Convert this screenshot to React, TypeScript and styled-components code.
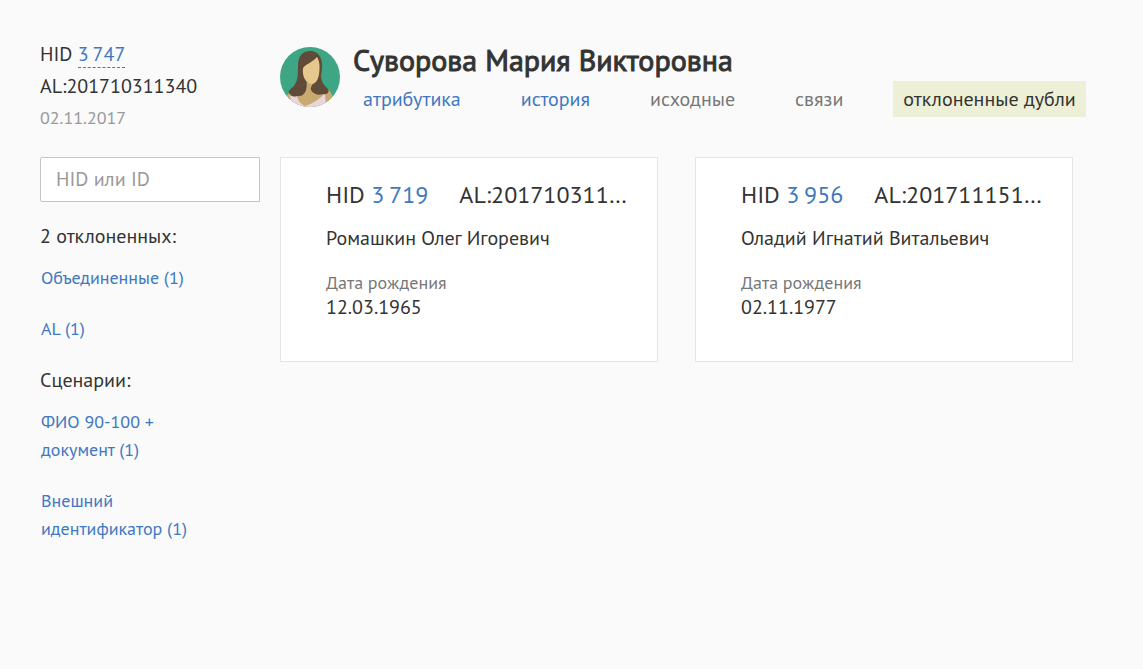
import React from "react";
import styled, { createGlobalStyle } from "styled-components";

const color = {
  page: "#fafafa",
  text: "#333333",
  link: "#4078c0",
  muted: "#999999",
  label: "#777777",
  border: "#e5e5e5",
  inputBorder: "#c4c4c4",
  active: "#edefd7",
};

const GlobalStyle = createGlobalStyle`
  *, *::before, *::after { box-sizing: border-box; }
  body {
    margin: 0;
    background: ${color.page};
    color: ${color.text};
    font-family: "PT Sans", "Noto Sans", sans-serif;
    font-size: 20px;
    line-height: 32px;
  }
  h1, h2, p, ul, dl, dd { margin: 0; padding: 0; }
  a { color: ${color.link}; text-decoration: none; }
`;

const Page = styled.div`
  display: grid;
  grid-template-columns: 220px minmax(0, 1fr);
  column-gap: 20px;
  padding: 38px 40px 40px;
`;

const Summary = styled.div`
  display: flex;
  flex-direction: column;
  align-items: flex-start;
`;

const CurrentLink = styled.a`
  display: inline-block;
  line-height: 26px;
  border-bottom: 1px dashed ${color.link};
`;

const SummaryDate = styled.p`
  color: ${color.muted};
  font-size: 18px;
`;

const Header = styled.header`
  display: flex;
  gap: 13px;
`;

const Portrait = styled.svg`
  display: block;
  flex: none;
  width: 60px;
  height: 60px;
  margin-top: 9px;
`;

const Name = styled.h1`
  font-size: 30px;
  line-height: 43px;
  font-weight: 400;
  -webkit-text-stroke: 1px ${color.text};
  white-space: nowrap;
`;

const Tabs = styled.nav`
  display: flex;
  gap: 40px;
  white-space: nowrap;
`;

const Tab = styled.a<{ $active?: boolean; $disabled?: boolean }>`
  padding: 0 10px;
  line-height: 36px;
  color: ${(p) => (p.$active ? color.text : p.$disabled ? color.label : color.link)};
  background: ${(p) => (p.$active ? color.active : "transparent")};
`;

const Sidebar = styled.aside`
  padding-top: 23px;
`;

const Search = styled.input`
  display: block;
  width: 100%;
  height: 45px;
  padding: 0 15px 2px;
  border: 1px solid ${color.inputBorder};
  border-radius: 2px 0 0 2px;
  background: #ffffff;
  color: ${color.text};
  font: inherit;
  line-height: 24px;
  &::placeholder { color: ${color.muted}; opacity: 1; }
`;

const Filters = styled.div`
  display: flex;
  flex-direction: column;
  gap: 23px;
  padding-top: 20px;
`;

const FilterTitle = styled.h2`
  font-size: 20px;
  line-height: 28px;
  font-weight: 400;
`;

const FilterList = styled.ul`
  display: flex;
  flex-direction: column;
  gap: 23px;
  width: 150px;
  margin-top: 14px;
  padding-left: 1px;
  list-style: none;
  font-size: 18px;
  line-height: 28px;
`;

const Cards = styled.main`
  display: grid;
  grid-template-columns: repeat(2, minmax(0, 1fr));
  column-gap: 37px;
  align-items: start;
  padding: 23px 30px 0 0;
`;

const Card = styled.article`
  padding: 20px 30px 42px 45px;
  border: 1px solid ${color.border};
  background: #ffffff;
`;

const CardHead = styled.div`
  display: flex;
  gap: 31px;
  font-size: 24px;
  line-height: 34px;
  white-space: nowrap;
`;

const CardName = styled.p`
  margin-top: 12px;
  line-height: 28px;
`;

const Facts = styled.dl`
  margin-top: 19px;
  line-height: 24px;
`;

const FactLabel = styled.dt`
  color: ${color.label};
  font-size: 18px;
`;

interface Duplicate {
  hid: string;
  externalId: string;
  name: string;
  birthDate: string;
}

const duplicates: Duplicate[] = [
  { hid: "3\u2009719", externalId: "AL:201710311…", name: "Ромашкин Олег Игоревич", birthDate: "12.03.1965" },
  { hid: "3\u2009956", externalId: "AL:201711151…", name: "Оладий Игнатий Витальевич", birthDate: "02.11.1977" },
];

const filterGroups = [
  { title: "2 отклоненных:", items: ["Объединенные (1)", "AL (1)"] },
  { title: "Сценарии:", items: ["ФИО 90-100 + документ (1)", "Внешний идентификатор (1)"] },
];

function Avatar() {
  return (
    <Portrait viewBox="0 0 60 60" role="img" aria-label="Портрет">
      <defs>
        <clipPath id="portrait">
          <circle cx="30" cy="30" r="30" />
        </clipPath>
      </defs>
      <g clipPath="url(#portrait)">
        <rect width="60" height="60" fill="#3ea585" />
        <path d="M5 60 C5 50 8 44 15 41 L26 36 H34 L45 40 C51 43 54 50 54 60 Z" fill="#c8a970" />
        <path d="M10 49 L17 49 C18 54 21 57 25 59 C32 57 40 52 45 46 L46 60 H12 Z" fill="#e8d5dc" />
        <path
          d="M30 4 C22 4 18 10 18 18 C18 28 18 35 13 40 C9 43 7 46 10 47 C12 50 15 50 17 49 C21 50 25 47 26 43 C27 39 27 36 26 34 L35 34 C33 37 30 40 31 43 C33 47 39 49 43 47 C47 48 50 45 48 42 C45 39 41 35 41 29 C42 23 43 17 41 12 C39 6 35 4 30 4 Z"
          fill="#604b38"
        />
        <path d="M23 21 C26 17 33 15 37 10 C40 14 40 22 39 27 C38 34 35 37 31 37 C26 36 22 30 23 21 Z" fill="#e7c78d" />
      </g>
    </Portrait>
  );
}

export default function App() {
  return (
    <>
      <GlobalStyle />
      <Page>
        <Summary>
          <div>
            HID <CurrentLink href="#current">{"3\u2009747"}</CurrentLink>
          </div>
          <p>AL:201710311340</p>
          <SummaryDate>02.11.2017</SummaryDate>
        </Summary>
        <Header>
          <Avatar />
          <div>
            <Name>Суворова Мария Викторовна</Name>
            <Tabs>
              <Tab href="#attributes">атрибутика</Tab>
              <Tab href="#history">история</Tab>
              <Tab href="#sources" $disabled>исходные</Tab>
              <Tab href="#links" $disabled>связи</Tab>
              <Tab href="#rejected" $active aria-current="page">отклоненные дубли</Tab>
            </Tabs>
          </div>
        </Header>
        <Sidebar>
          <Search type="text" placeholder="HID или ID" aria-label="HID или ID" />
          <Filters>
            {filterGroups.map((group) => (
              <section key={group.title}>
                <FilterTitle>{group.title}</FilterTitle>
                <FilterList>
                  {group.items.map((item) => (
                    <li key={item}>
                      <a href="#filter">{item}</a>
                    </li>
                  ))}
                </FilterList>
              </section>
            ))}
          </Filters>
        </Sidebar>
        <Cards>
          {duplicates.map((item) => (
            <Card key={item.externalId}>
              <CardHead>
                <span>
                  HID <a href="#card">{item.hid}</a>
                </span>
                <span>{item.externalId}</span>
              </CardHead>
              <CardName>{item.name}</CardName>
              <Facts>
                <FactLabel>Дата рождения</FactLabel>
                <dd>{item.birthDate}</dd>
              </Facts>
            </Card>
          ))}
        </Cards>
      </Page>
    </>
  );
}
